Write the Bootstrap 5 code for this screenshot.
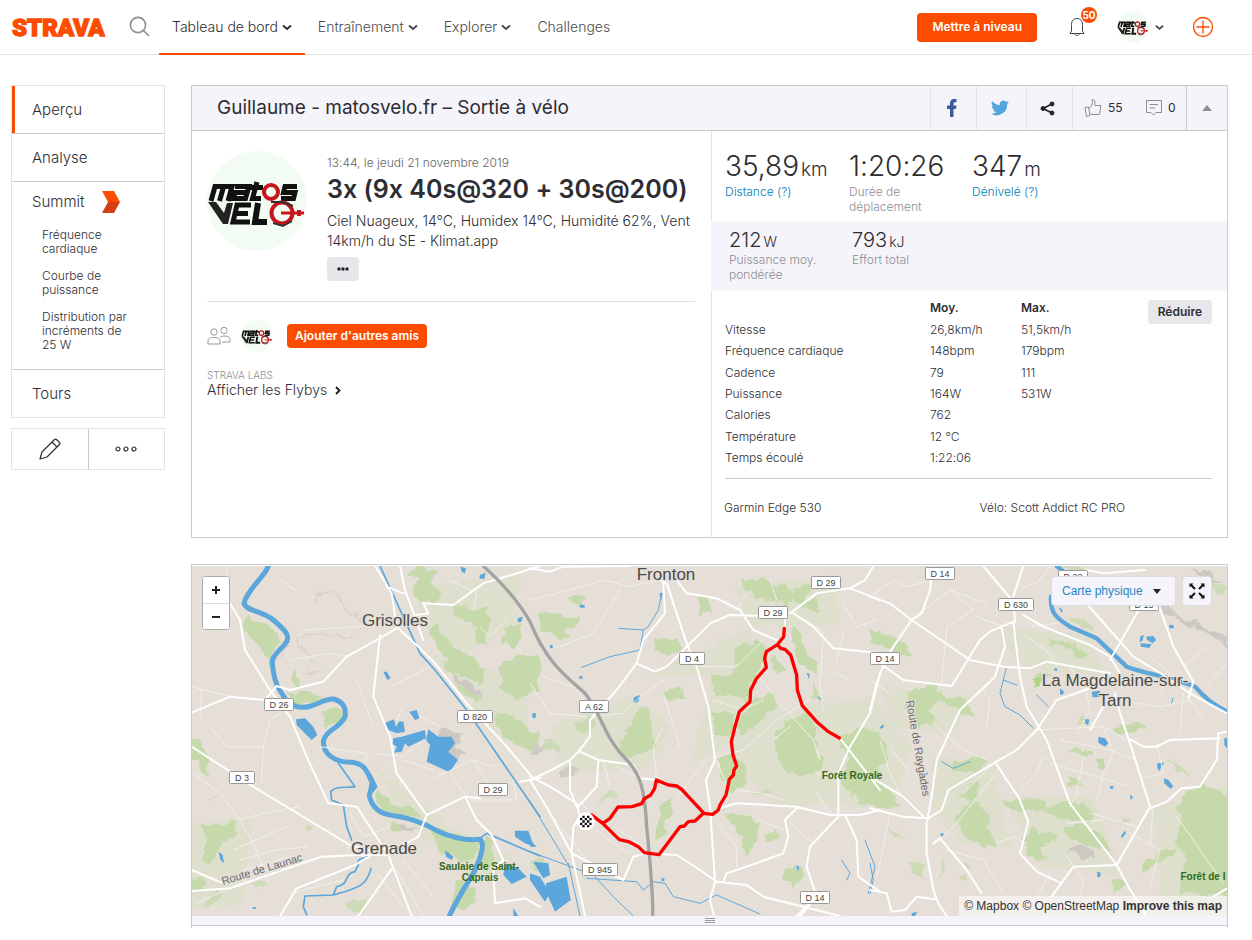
<!DOCTYPE html>
<html lang="fr">
<head>
<meta charset="utf-8">
<meta name="viewport" content="width=device-width, initial-scale=1">
<title>Sortie à vélo | Strava</title>
<link href="https://cdn.jsdelivr.net/npm/bootstrap@5.3.0/dist/css/bootstrap.min.css" rel="stylesheet">
<style>
  :root { --orange: #fc4c02; --ink: #2d2d32; --line: #c9c9cf; --soft: #e3e3e8; --tint: #f4f4fa; --blue: #007fb6; }
  body { font-family: Inter, "Liberation Sans", sans-serif; font-size: 14px; font-weight: 300; font-feature-settings: "calt" 0; line-height: 20px; color: var(--ink); background: #fff; }
  a { color: inherit; text-decoration: none; }
  svg { display: block; flex: none; }
  h1, h2, p, dl, dd, ul { margin: 0; }
  button { color: inherit; }

  .topbar { height: 55px; border-bottom: 1px solid #e3e3e3; padding: 0 38px 0 11px; }
  .topbar .nav-link { height: 55px; padding: 2px 13px 0; gap: 4px; color: #494950; display: flex; align-items: center; border-bottom: 2px solid transparent; }
  .topbar .nav-link.active { color: var(--ink); border-color: var(--orange); }
  .wordmark { font: 900 24px Roboto, sans-serif; fill: var(--orange); stroke: var(--orange); stroke-width: 1.4px; }
  .btn-orange { --bs-btn-bg: #fc4c02; --bs-btn-color: #fff; --bs-btn-hover-bg: #e34402; --bs-btn-hover-color: #fff; font-size: 12px; font-weight: 600; line-height: 16px; border: 0; }
  .upgrade { border-radius: 4px; padding: 6px 15px 7px; }
  .counter { top: -10px; left: 12px; width: 16px; height: 16px; border-radius: 8px; background: var(--orange); color: #fff; font-size: 10px; font-weight: 700; line-height: 16px; text-align: center; }
  .profile { gap: 6px; color: #494950; }

  .shell { display: grid; grid-template-columns: 154px minmax(0, 1fr); gap: 26px; padding: 30px 24px 0 11px; align-items: start; }
  .sidemenu { border: 1px solid var(--soft); }
  .sidemenu > li + li { border-top: 1px solid var(--line); }
  .sidemenu .entry { display: flex; align-items: center; height: 47px; padding-left: 20px; font-size: 15px; }
  .sidemenu .entry.current { border-left: 3px solid var(--orange); padding-left: 17px; }
  .sidemenu .entry.short { height: 40px; gap: 18px; }
  .sublist { padding: 6px 20px 15px 30px; font-size: 12px; line-height: 14px; }
  .sublist li { margin-bottom: 13px; }
  .sublist li:last-child { margin-bottom: 2px; }
  .tools { border: 1px solid var(--soft); margin-top: 10px; height: 42px; }
  .tools button { flex: 1; background: none; border: 0; padding: 0; display: grid; place-items: center; }
  .tools button + button { border-left: 1px solid var(--line); }

  .panel { border: 1px solid var(--line); }
  .panel-top { background: var(--tint); border-bottom: 1px solid var(--line); height: 45px; }
  .panel-top h1 { font-size: 19px; font-weight: 400; line-height: 44px; padding-left: 25px; }
  .share { border: 0; border-left: 1px solid var(--soft); background: none; padding: 0; display: grid; place-items: center; }
  .kudos { border-left: 1px solid var(--soft); width: 114px; font-size: 12px; padding-left: 11px; }
  .kudos button { border: 0; background: none; padding: 0; display: flex; align-items: center; gap: 6px; font-weight: 400; }
  .split { display: grid; grid-template-columns: minmax(0, 519fr) minmax(0, 516fr); min-height: 406px; }
  .left-side { padding: 16px 16px 16px 15px; }
  .when { font-size: 12px; line-height: 16px; color: #666; }
  .title { font-size: 25px; font-weight: 600; line-height: 36px; white-space: nowrap; }
  .more { background: #e6e6eb; border: 0; border-radius: 4px; width: 32px; height: 24px; padding: 0; display: grid; place-items: center; margin-top: 6px; }
  .friends { border-top: 1px solid #dfdfe3; margin-top: 20px; padding-top: 18px; }
  .labs { margin-top: 18px; }
  .labs span { display: block; font-size: 10px; line-height: 10px; color: #8e8e93; }
  .right { border-left: 1px solid var(--soft); }
  .stats { display: grid; padding: 17px 13px 0; grid-template-columns: 124px 123px 1fr; height: 90px; }
  .stats b { display: block; font-weight: 300; font-size: 28px; line-height: 36px; height: 36px; }
  .stats b span { font-size: 19px; margin-left: 2px; }
  .stats small { display: block; font-size: 12px; line-height: 15px; color: #8e8e93; }
  .stats a { color: var(--blue); }
  .stats.minor { background: var(--tint); height: 70px; padding: 7px 18px 0; grid-template-columns: 123px 1fr; margin-left: -1px; }
  .stats.minor b { font-size: 20px; line-height: 24px; height: 24px; }
  .stats.minor b span { font-size: 14px; }
  .detail { margin: 6px 15px 0 13px; border-bottom: 1px solid var(--line); height: 182px; }
  .detail table { font-size: 12px; line-height: 16px; height: 172px; width: 380px; }
  .detail th { font-weight: 300; padding: 0; }
  .detail thead tr { height: 22px; }
  .detail thead th { font-weight: 600; }
  .detail td { padding: 0; }
  .reduce { background: #e6e6eb; border: 0; border-radius: 4px; font-size: 12px; font-weight: 600; height: 24px; padding: 0 10px; margin-top: 3px; }
  .gear { font-size: 12px; padding: 19px 12px 0; }
  .gear .bike { padding-left: 20px; }

  .mapcard { margin-top: 26px; padding-top: 1px; }
  .mapbox { height: 350px; overflow: hidden; background: #e5dfd8; position: relative; }
  .mapbox > svg { width: 100%; height: 350px; }
  .zoomer { left: 10px; top: 10px; width: 28px; border: 1px solid #aaa; border-radius: 4px; background: #fff; overflow: hidden; }
  .zoomer button { display: grid; place-items: center; border: 0; background: #fff; width: 26px; height: 26px; padding: 0; }
  .zoomer button + button { border-top: 1px solid #ddd; }
  .overlay-btn { background: var(--tint); border: 1px solid #dcdce4; border-radius: 4px; height: 30px; top: 10px; }
  .layerpick { right: 51px; width: 125px; padding: 0 10px; color: #2b84c4; font: 12px/28px "Liberation Sans", sans-serif; display: flex; align-items: center; justify-content: space-between; }
  .fullview { right: 15px; width: 30px; padding: 0; display: grid; place-items: center; }
  .credit { right: 0; bottom: 0; background: rgba(255,255,255,.5); font: 12px/20px "Liberation Sans", sans-serif; padding: 0 5px; color: #333; }
  .grip { height: 9px; background: var(--tint); display: grid; place-items: center; }
  .chart-edge { height: 2px; border: solid var(--line); border-width: 0 1px; }
  .place { font: 17px "Liberation Sans", sans-serif; fill: #4a4a49; text-anchor: middle; stroke: #e5dfd8; stroke-width: 2px; paint-order: stroke; }
  .wood { font: bold 10px "Liberation Sans", sans-serif; fill: #33691e; text-anchor: middle; }
  .street { font: 11px "Liberation Sans", sans-serif; fill: #6b6b6b; stroke: #e5dfd8; stroke-width: 2px; paint-order: stroke; }
  .shield text { font: 9px "Liberation Sans", sans-serif; fill: #444; text-anchor: middle; }
  .shield rect { fill: #fff; stroke: #999; }
</style>
</head>
<body>
<svg width="0" height="0" class="position-absolute" aria-hidden="true">
  <defs>
    <symbol id="avatar" viewBox="0 0 100 100">
      <circle cx="50" cy="50" r="50" fill="#f3fcf3"/>
      <g fill="none" stroke="#111" stroke-width="5">
        <path d="M4 50 L8 35.500 H25 L21 50 M16.500 36 L12.500 50 M28 35.500 H42 L38.500 47.500 H26.500 L28 41.500 H40 M50 31 L45.500 47.500 H54 M43 36.500 H56"/>
        <path d="M90 35.500 H78 L76.500 41.500 H88 L86.500 47.500 H74"/>
        <path d="M44 54 H30 L26 71 H43 M29 62.500 H41"/>
        <path d="M51 52 L48 71 H60" stroke-width="6"/>
      </g>
      <path d="M1 51 H9 L17 62 L20 52 H26 L21 73 H16 Z" fill="#222"/>
      <g fill="none" stroke="#c8141c">
        <circle cx="64" cy="41" r="7" stroke-width="4"/><circle cx="75" cy="62" r="10.500" stroke-width="4"/>
        <path d="M74 62 H97" stroke-width="3"/><path d="M90 62 H94" stroke-width="6"/>
      </g>
      <path d="M64 51 L76 51 L86 55 M66 72 L76 75 L85 70" fill="none" stroke="#333" stroke-width="2"/>
    </symbol>
    <symbol id="chev" viewBox="0 0 10 7"><path d="M1 1.500 L5 5 L9 1.500" fill="none" stroke="currentColor" stroke-width="2"/></symbol>
    <filter id="ragged" x="-5%" y="-5%" width="110%" height="110%">
      <feTurbulence type="fractalNoise" baseFrequency=".09" numOctaves="3" seed="4"/>
      <feDisplacementMap in="SourceGraphic" scale="11" xChannelSelector="R" yChannelSelector="G"/>
    </filter>
  </defs>
</svg>

<header class="topbar d-flex align-items-center">
  <a href="#" aria-label="Strava"><svg width="98" height="36"><text class="wordmark" x="1" y="27">STRAVA</text></svg></a>
  <button class="btn p-0 border-0 ms-3 me-1" aria-label="Rechercher"><svg class="ms-1" width="22" height="22" viewBox="0 0 22 22" fill="none" stroke="#8c8c8c" stroke-width="1.600"><circle cx="9" cy="9" r="7.600"/><path d="M14.500 14.500 L20 20"/></svg></button>
  <nav class="d-flex ms-1">
    <a class="nav-link active" href="#">Tableau de bord <svg width="10" height="7"><use href="#chev"/></svg></a>
    <a class="nav-link" href="#">Entraînement <svg width="10" height="7"><use href="#chev"/></svg></a>
    <a class="nav-link" href="#">Explorer <svg width="10" height="7"><use href="#chev"/></svg></a>
    <a class="nav-link" href="#">Challenges</a>
  </nav>
  <button class="btn btn-orange upgrade ms-auto text-nowrap">Mettre à niveau</button>
  <button class="btn p-0 border-0 position-relative ms-4" aria-label="Notifications"><svg class="ms-2" width="16" height="20" viewBox="0 0 16 20" fill="none" stroke="#494950"><path d="M1 16.500 L2.500 14 V7.500 C2.500 3.500 5 1.500 8 1.500 C11 1.500 13.500 3.500 13.500 7.500 V14 L15 16.500 Z M6 17 C6 19 10 19 10 17"/></svg><span class="counter position-absolute ms-2">50</span></button>
  <a href="#" class="profile d-flex align-items-center ms-4" aria-label="Profil"><svg class="ms-2" width="32" height="32"><use href="#avatar"/></svg><svg width="9" height="7"><use href="#chev"/></svg></a>
  <button class="btn p-0 border-0 ms-4" aria-label="Ajouter"><svg class="ms-1" width="22" height="22" viewBox="0 0 22 22" fill="none" stroke="#fc4c02" stroke-width="1.300"><circle cx="11" cy="11" r="9.500"/><path d="M11 4.500 V17.500 M4.500 11 H17.500"/></svg></button>
</header>

<div class="shell">
  <aside>
    <ul class="sidemenu list-unstyled">
      <li><a class="entry current" href="#">Aperçu</a></li>
      <li><a class="entry" href="#">Analyse</a></li>
      <li><a class="entry short" href="#">Summit <svg width="18" height="22" viewBox="0 0 18 22"><path d="M0 0 H12 L18 11 H6 Z" fill="#fc4c02"/><path d="M0 22 H12 L18 11 H6 Z" fill="#d23f14"/></svg></a>
        <ul class="sublist list-unstyled">
          <li><a href="#">Fréquence cardiaque</a></li>
          <li><a href="#">Courbe de<br>puissance</a></li>
          <li><a href="#">Distribution par<br>incréments de<br>25 W</a></li>
        </ul></li>
      <li><a class="entry" href="#">Tours</a></li>
    </ul>
    <div class="tools d-flex">
      <button aria-label="Modifier"><svg width="24" height="24" viewBox="0 0 24 24" fill="none" stroke="#2d2d32" stroke-width="1.200" stroke-linejoin="round"><path d="M2 22 L4 15 L16.500 2.500 Q17.500 1.500 19 3 L21.500 5.500 Q22.500 6.500 21.500 7.500 L9 20 Z M14 5 L19 10"/></svg></button>
      <button aria-label="Plus d'actions"><svg width="22" height="6" viewBox="0 0 22 6" fill="none" stroke="#2d2d32" stroke-width="1.200"><circle cx="3" cy="3" r="2"/><circle cx="11" cy="3" r="2"/><circle cx="19" cy="3" r="2"/></svg></button>
    </div>
  </aside>

  <main>
    <section class="panel">
      <div class="panel-top d-flex">
        <h1 class="flex-grow-1">Guillaume - matosvelo.fr – Sortie à vélo</h1>
        <button class="share" style="width:46px" aria-label="Facebook"><svg class="me-1" width="10" height="18" viewBox="0 0 10 18" fill="#3b5998"><path d="M3 18 V10 H0 V6.500 H3 V4.500 C3 1.500 4.500 0 7 0 H9.500 V3.200 H8 C6.800 3.200 6.500 3.800 6.500 4.700 V6.500 H9.500 L9 10 H6.500 V18 Z"/></svg></button>
        <button class="share" style="width:50px" aria-label="Twitter"><svg class="me-1" width="18" height="16" viewBox="0 0 24 20" fill="#55a4dc"><path d="M24 2.400 a10 10 0 0 1-2.800.8 5 5 0 0 0 2.100-2.700 10 10 0 0 1-3.100 1.200 4.900 4.900 0 0 0-8.400 4.500 A14 14 0 0 1 1.700 1 a4.900 4.900 0 0 0 1.500 6.600 5 5 0 0 1-2.200-.6 4.900 4.900 0 0 0 4 4.900 5 5 0 0 1-2.300.1 4.900 4.900 0 0 0 4.600 3.400 A10 10 0 0 1 0 17.500 a14 14 0 0 0 21.500-12.400 A10 10 0 0 0 24 2.400"/></svg></button>
        <button class="share" style="width:46px" aria-label="Partager"><svg class="me-1" width="15" height="15" viewBox="0 0 15 15" fill="#242428" stroke="#242428"><path d="M12 3 L3 7.500 L12 12" fill="none" stroke-width="1.800"/><circle cx="12" cy="3" r="2"/><circle cx="3" cy="7.500" r="2"/><circle cx="12" cy="12" r="2"/></svg></button>
        <div class="kudos d-flex align-items-center">
          <button style="width:62px" aria-label="55 kudos"><svg width="18" height="18" viewBox="0 0 18 18" fill="none" stroke="#8e8e93"><path d="M1 8.500 L4.500 8 L6 16.500 L2.500 17.500 Z M4.800 10 L8.500 5 L8 1 C9.500 0 11 1.500 11 3 L11 6.500 H17 L15.500 15.500 H9 L6 15"/></svg><span>55</span></button>
          <button aria-label="0 commentaire"><svg width="16" height="16" viewBox="0 0 16 16" fill="none" stroke="#8e8e93"><path d="M.5 .5 H15.500 V12.500 H10 L7.500 15 L5 12.500 H.5 Z M3.500 4.500 H12 M3.500 8 H9"/></svg><span>0</span></button>
        </div>
        <button class="share" style="width:41px;border-color:#c9c9cf" aria-label="Réduire le panneau"><svg width="10" height="6"><path d="M0 6 L5 0 L10 6 Z" fill="#8e8e93"/></svg></button>
      </div>

      <div class="split">
        <div class="left-side">
          <div class="d-flex pt-1">
            <svg width="100" height="100"><use href="#avatar"/></svg>
            <div class="ms-3 ps-1 pt-1">
              <p class="when">13:44, le jeudi 21 novembre 2019</p>
              <h2 class="title">3x (9x 40s@320 + 30s@200)</h2>
              <p class="pt-1 text-nowrap">Ciel Nuageux, 14°C, Humidex 14°C, Humidité 62%, Vent<br>14km/h du SE - Klimat.app</p>
              <button class="more" aria-label="Plus"><svg width="12" height="4" fill="#242428"><circle cx="2" cy="2" r="1.700"/><circle cx="6" cy="2" r="1.700"/><circle cx="10" cy="2" r="1.700"/></svg></button>
            </div>
          </div>
          <div class="friends">
            <div class="d-flex align-items-center">
              <svg width="24" height="20" viewBox="0 0 24 20" fill="none" stroke="#999"><circle cx="7" cy="6" r="3.200"/><path d="M1 18 V15 C1 12 4 11.500 7 11.500 C10 11.500 13 12 13 15 V18 Z"/><circle cx="17" cy="4.500" r="3.200"/><path d="M13 11.500 C14 10.500 16 10 17 10 C20 10 23 10.500 23 13.500 V16 H15"/></svg>
              <svg class="ms-2 me-1" width="36" height="32"><use href="#avatar"/></svg>
              <button class="btn btn-orange rounded-1 ms-2 px-2 py-1 text-nowrap">Ajouter d'autres amis</button>
            </div>
            <div class="labs"><span>STRAVA LABS</span><a class="d-flex align-items-center gap-2" href="#">Afficher les Flybys <svg width="6" height="9"><path d="M1 1 L4.500 4.500 L1 8" fill="none" stroke="#242428" stroke-width="2"/></svg></a></div>
          </div>
        </div>

        <div class="right">
          <div class="stats">
            <div><b>35,89<span>km</span></b><small><a href="#">Distance (?)</a></small></div>
            <div><b>1:20:26</b><small>Durée de<br>déplacement</small></div>
            <div><b>347<span>m</span></b><small><a href="#">Dénivelé (?)</a></small></div>
          </div>
          <div class="stats minor">
            <div><b>212<span>W</span></b><small>Puissance moy.<br>pondérée</small></div>
            <div><b>793<span>kJ</span></b><small>Effort total</small></div>
          </div>
          <div class="detail d-flex justify-content-between align-items-start">
            <table>
              <colgroup><col style="width:205px"><col style="width:91px"><col></colgroup>
              <thead><tr><th></th><th scope="col">Moy.</th><th scope="col">Max.</th></tr></thead>
              <tbody>
                <tr><th scope="row">Vitesse</th><td>26,8km/h</td><td>51,5km/h</td></tr>
                <tr><th scope="row">Fréquence cardiaque</th><td>148bpm</td><td>179bpm</td></tr>
                <tr><th scope="row">Cadence</th><td>79</td><td>111</td></tr>
                <tr><th scope="row">Puissance</th><td>164W</td><td>531W</td></tr>
                <tr><th scope="row">Calories</th><td>762</td><td></td></tr>
                <tr><th scope="row">Température</th><td>12 ℃</td><td></td></tr>
                <tr><th scope="row">Temps écoulé</th><td>1:22:06</td><td></td></tr>
              </tbody>
            </table>
            <button class="reduce">Réduire</button>
          </div>
          <div class="gear row g-0"><div class="col">Garmin Edge 530</div><div class="col bike">Vélo: Scott Addict RC PRO</div></div>
        </div>
      </div>
    </section>

    <section class="panel mapcard">
      <div class="mapbox">
        <svg viewBox="0 0 1035 350" preserveAspectRatio="xMidYMid slice" fill="none" stroke-linecap="round" stroke-linejoin="round" role="img" aria-label="Tracé de la sortie">
          <g filter="url(#ragged)">
          <!-- light scrub -->
          <g fill="#dbdfc6" opacity=".6">
            <path d="M220 20 L330 10 L320 60 L270 90 L230 60 Z M240 90 L330 110 L340 190 L300 160 Z M360 160 L440 130 L480 160 L460 200 L370 210 Z M450 110 L520 80 L560 60 L560 160 L500 200 L520 110 Z M0 260 L60 250 L50 340 L0 340 Z M180 200 L260 260 L320 290 L290 320 L230 270 Z M560 150 L680 130 L720 180 L700 240 L590 240 L530 200 Z M690 120 L780 130 L760 170 L700 160 Z M740 190 L800 200 L820 280 L770 280 L740 240 Z M810 230 L900 230 L930 310 L850 300 Z M960 240 L1035 220 L1035 340 L970 340 Z M800 60 L900 70 L910 110 L830 100 Z M540 20 L640 10 L650 60 L560 60 Z"/>
          </g>
          <!-- woods, west -->
          <g transform="translate(-2 -6) scale(.33333)">
            <g fill="#c5d9aa">
              <path d="M165 170 L215 190 L262 215 L272 245 L245 285 L240 325 L215 270 L180 230 L160 195 Z"/>
              <path d="M290 395 L350 395 L400 405 L370 430 L320 435 Z M400 455 L440 435 L458 450 L450 490 L405 508 Z M302 335 L325 350 L335 390 L320 385 Z"/>
              <path d="M650 35 L690 18 L740 35 L725 65 L750 95 L745 130 L690 125 L665 95 L685 60 Z M795 140 L850 150 L890 140 L905 175 L890 215 L895 260 L860 250 L850 195 L800 165 Z"/>
              <path d="M715 200 L745 195 L760 230 L800 270 L850 290 L885 340 L880 368 L830 355 L790 340 L755 315 L780 305 L755 270 L725 235 Z"/>
              <path d="M940 200 L990 190 L995 230 L970 265 L930 250 L955 225 Z M920 320 L1000 285 L1050 290 V400 L1010 405 L980 420 L925 385 L940 360 Z M790 370 L830 380 L885 420 L830 410 Z M915 455 L970 475 L1020 510 L1050 520 V580 L1000 570 L940 530 L925 500 Z"/>
              <path d="M5 530 L35 545 L55 600 L50 650 L20 600 L5 590 Z M35 800 L135 785 L140 820 L100 850 L60 920 L40 900 L50 840 Z M5 960 L50 955 L40 990 L5 990 Z"/>
              <path d="M560 680 L600 730 L680 750 L690 775 L600 765 L560 735 Z M720 800 L830 835 L870 850 L860 895 L820 905 L760 880 L740 850 Z M885 830 L910 850 L915 900 L890 940 L870 920 Z M800 960 L850 985 L860 1020 L820 1045 L780 1040 Z M600 790 L650 790 L640 815 L600 805 Z"/>
              <path d="M185 970 L225 960 L215 985 Z M470 1030 L530 1020 L525 1060 L480 1050 Z M340 790 L375 795 L350 808 Z M40 1040 L75 1000 L90 1010 L60 1045 Z" opacity=".7"/>
            </g>
            <path d="M760 500 L815 525 L800 560 L820 580 L800 600 L770 570 L745 530 Z M620 790 L680 800 L660 812 L625 800 Z M790 345 L840 370 L880 410 L850 400 L800 365 Z" fill="#cdc8c4"/>
            <g stroke="#cfcac3" stroke-width="3"><path d="M380 130 L385 100 L440 95 L460 150 L500 165 L520 200 L480 230 L380 225 L340 230 M300 250 L270 300 M320 230 L330 270 L370 300 L360 320 M345 340 L395 335 M930 330 L990 315 M60 720 L85 700 M1000 560 L1040 580"/></g>
          </g>
          <!-- woods, centre -->
          <g transform="translate(338 -6) scale(.33333)" fill="#c5d9aa">
            <path d="M20 165 L80 155 L150 175 L145 200 L105 205 L110 240 L80 235 L40 210 Z M115 110 L165 105 L160 140 L120 135 Z M500 110 L540 110 L545 165 L515 160 Z"/>
            <path d="M640 60 L700 55 L735 75 L770 70 L790 110 L780 145 L740 115 L690 120 L645 90 Z M785 90 L830 70 L845 90 L820 115 L860 115 L870 160 L830 150 L790 120 Z"/>
            <path d="M535 340 L600 350 L620 320 L610 265 L680 240 L710 260 L700 310 L670 370 L650 420 L590 400 L560 420 L550 380 Z M640 470 L670 420 L725 400 L740 435 L690 490 L640 520 L620 500 Z M715 300 L740 290 L770 340 L745 340 Z"/>
            <path d="M310 460 L350 440 L370 485 L375 560 L330 580 L290 600 L270 570 L285 520 Z M545 455 L610 460 L600 530 L555 525 Z M560 590 L610 580 L650 620 L650 670 L600 700 L575 650 Z"/>
            <path d="M740 520 L770 480 L830 455 L855 500 L855 570 L880 600 L840 650 L780 640 L740 600 Z M930 545 L975 505 L1050 510 V740 L990 720 L940 690 L935 640 L960 600 Z M380 240 L440 235 L455 270 L410 290 L375 275 Z M400 390 L450 380 L470 410 L435 425 L405 415 Z"/>
            <path d="M395 730 L425 715 L430 750 L405 790 L410 825 L370 840 L385 790 Z M580 750 L640 760 L690 790 L680 830 L650 890 L630 870 L640 830 L600 790 Z M710 820 L745 810 L745 840 L705 845 Z M760 930 L820 920 L825 950 L790 985 L760 960 Z M780 220 L800 200 L830 280 L870 310 L860 350 L810 310 Z M850 370 L870 400 L880 440 L850 410 Z"/>
            <path d="M5 900 L40 890 L60 920 L20 940 Z M50 540 L90 555 L80 580 L40 570 Z M200 730 L240 690 L260 710 Z M660 700 L710 690 L730 710 Z M130 500 L180 470 L200 500 L150 520 Z" opacity=".7"/>
            <path d="M5 545 L50 555 L20 585 L5 590 Z M80 640 L120 615 L150 625 L130 650 L90 650 Z" fill="#cfcbc4"/>
          </g>
          <!-- woods, east -->
          <g transform="translate(678 -6) scale(.33333)" fill="#c5d9aa">
            <path d="M0 205 L50 225 L90 235 L120 285 L80 285 L60 265 L0 250 Z M110 390 L200 380 L230 410 L280 410 L310 465 L280 475 L260 440 L210 430 L180 445 L190 490 L150 500 L110 440 Z M0 520 L50 555 L45 600 L0 620 Z M0 660 L60 690 L90 740 L40 745 L0 720 Z"/>
            <path d="M260 600 L330 585 L350 600 L330 630 L290 635 L250 630 Z M320 660 L330 700 L310 720 L350 760 L375 860 L345 865 L280 820 L255 780 L300 720 L260 710 Z M395 725 L490 715 L540 740 L590 730 L660 740 L670 785 L600 780 L490 750 L420 750 Z"/>
            <path d="M490 810 L560 825 L555 850 L515 850 L530 900 L500 905 L470 880 L460 840 Z M580 805 L640 790 L700 830 L720 880 L640 850 L600 830 Z M600 645 L620 650 L625 680 L590 680 Z M600 570 L665 570 L670 585 L600 580 Z M680 600 L705 600 L705 630 L680 625 Z"/>
            <path d="M920 740 L950 705 L1000 670 L1060 700 L1090 690 V1005 L930 1000 L930 950 L950 900 L920 850 L935 790 Z M730 500 L820 485 L825 510 L740 525 Z M820 910 L880 870 L930 870 L900 890 L860 905 L825 940 Z M735 960 L765 970 L750 1000 L730 1000 Z M540 235 L600 245 L650 290 L640 300 L590 260 L540 250 Z M490 350 L520 335 L550 340 L510 365 Z"/>
            <path d="M570 25 L620 18 L650 30 L640 55 Z M590 170 L640 180 L680 210 L640 205 Z M1010 60 L1070 80 V110 L1040 100 Z M215 890 L230 930 L210 960 L215 920 Z M280 900 L300 910 L275 960 L290 960 Z M110 910 L165 905 L160 960 L140 940 Z M900 595 L950 640 L960 660 L910 620 Z M760 775 L790 785 L750 790 Z M640 460 L650 500 L620 490 Z M40 800 L80 820 L110 835 L80 830 Z" opacity=".75"/>
            <path d="M488 355 H512 V380 H490 Z" fill="#aed581"/>
            <path d="M880 130 L930 170 L990 190 L1071 235 V260 L1000 210 L930 185 L870 145 Z M965 30 L1020 40 L1060 70 L1000 65 Z M590 870 L640 855 L680 885 L640 895 Z" fill="#cdc8c2"/>
          </g>
          </g>

          <!-- water -->
          <g transform="translate(-2 -6) scale(.33333)" stroke="#5ba6da">
            <path d="M235 18 C225 50 170 90 162 130 C170 155 215 150 250 180 C285 210 300 225 290 245 C270 275 245 285 247 310 C250 345 255 370 270 392 C285 415 290 430 320 440 C370 450 395 415 430 417 C460 425 470 445 465 470 C450 505 405 510 400 545 C400 580 430 605 480 607 C520 608 530 630 543 660 C560 690 530 690 540 715 C555 765 600 765 640 772 C690 785 710 795 740 812 C790 835 830 842 870 838 C885 850 875 890 850 940 C820 990 800 1020 778 1068" stroke-width="15"/>
            <path d="M570 18 L690 280 L735 330 L830 450 L1050 770 M445 610 L495 680 C470 685 440 675 422 695 L425 720 L460 735 L470 800 L485 840 M545 885 C520 900 500 890 505 915 L495 935 C460 940 480 975 440 980 L430 1005 L345 1008 L340 1040 L350 1064 M870 835 L890 820 L1050 888 M543 925 C530 980 500 985 430 1005" stroke-width="5"/>
            <g fill="#5ba6da" stroke="none"><path d="M318 478 L345 475 L370 500 L382 525 L365 540 L340 515 L320 495 Z M580 335 L590 335 L602 355 L592 360 Z M658 455 L680 450 L688 475 L675 480 Z M583 490 L612 478 L618 500 L628 484 L640 485 L645 515 L620 520 L595 510 Z M610 535 L635 530 L705 510 L708 535 L655 560 L645 550 L635 575 L612 578 L620 560 L608 552 Z M715 508 L745 530 L785 530 L795 550 L775 575 L804 600 L778 637 L710 605 L720 555 L708 540 Z M543 640 L563 680 L548 700 L535 690 Z M765 870 L790 890 L785 900 L768 890 Z M975 812 L1015 812 L1032 860 L1005 850 L975 830 Z M945 910 L985 925 L1010 950 L965 972 L940 945 Z M85 875 L98 885 L102 910 L92 900 Z M812 20 L828 25 L825 40 L815 35 Z M870 45 L888 38 L882 58 L868 55 Z M983 175 L998 170 L995 185 L983 187 Z M1028 460 h8 v14 h-8 Z M970 1045 L985 1068 H970 Z M188 1042 h10 v5 h-10 Z"/></g>
          </g>
          <g transform="translate(338 -6) scale(.33333)" stroke="#5ba6da">
            <path d="M0 725 L115 915 M115 910 L150 1068 M0 875 L190 945 L250 1010 L310 1068 M170 955 L320 965 L340 990 L370 965 L405 970 L430 1010 L510 1030 L560 1005 L690 1062 M395 100 L385 150 L355 200 L340 210 L265 205 M340 210 L330 270 L240 290 L155 322 M1005 840 L1035 920 L1015 1000 M935 900 L960 940 L950 960" stroke-width="3"/>
            <path d="M10 905 L55 910 L60 945 L40 955 L30 940 Z M0 940 L30 950 L60 1000 L45 1025 L0 960 Z M48 970 L110 950 L122 1020 L75 1055 L50 1000 Z M0 840 L20 860 L0 860 Z M312 412 L330 405 L325 425 L310 430 Z M60 255 h8 v10 h-8 Z M148 348 h9 v8 h-9 Z M8 460 h9 v12 h-9 Z M150 135 h14 v8 h-14 Z M830 340 L838 340 L838 358 Z M862 408 L872 415 L872 422 Z M798 915 L808 920 L805 935 Z M395 955 h8 v8 h-8 Z M388 100 L398 98 L394 120 Z" fill="#5ba6da" stroke="none"/>
          </g>
          <g transform="translate(678 -6) scale(.33333)" stroke="#5ba6da">
            <path d="M560 18 L575 30 L600 60 M543 110 C540 160 560 175 600 200 L680 235 L770 320 C840 345 880 345 975 380 C1000 410 1030 435 1071 455" stroke-width="13"/>
            <path d="M410 320 L400 360 L390 400 L405 440 L450 465 L490 505 M400 360 L440 375 M500 405 L535 440 M215 605 L250 625 L300 605 M0 910 L10 960 L0 1000 M908 415 L905 430" stroke-width="3"/>
            <path d="M30 500 L42 493 L40 502 L32 508 Z M565 140 L578 150 L575 160 Z M812 228 L822 226 L816 244 L808 246 Z M828 230 L850 228 L858 240 L848 250 L832 240 Z M812 250 L845 252 L838 264 L812 260 Z M897 195 L910 195 L912 205 L898 205 Z M570 385 L582 395 L578 405 L570 402 Z M665 395 L690 392 L690 410 L668 412 Z M645 478 L658 478 L655 495 L647 492 Z M685 530 L705 535 L715 550 L705 560 L685 548 Z M862 610 L882 608 L868 632 L862 625 Z M882 655 L895 660 L910 678 L902 687 L883 670 Z M780 705 L790 710 L782 720 Z M753 828 L765 812 L768 818 L757 835 Z M682 935 L692 938 L690 952 L682 950 Z M1063 535 L1071 535 V565 L1063 555 Z M720 678 h10 v8 h-10 Z M212 820 h8 v8 h-8 Z M165 640 L175 637 L170 647 Z M125 1060 L142 1055 L135 1068 H125 Z M553 325 h8 v7 h-8 Z" fill="#5ba6da" stroke="none"/>
          </g>

          <!-- lanes -->
          <g stroke="#f3efea" stroke-width="3">
            <g transform="translate(-2 -6) scale(.33333)"><path d="M5 380 L120 410 M30 470 L35 390 M110 18 V70 L125 170 M270 60 L330 100 M340 210 L500 200 L610 195 M480 290 L420 280 L300 300 M500 360 L520 420 L550 500 M600 380 L720 320 M640 440 L620 480 M870 200 L900 230 L950 180 M560 580 L640 590 L700 540 M640 600 L730 630 M730 655 L850 600 L910 620 M850 600 L900 680 M780 640 L830 710 M835 720 L980 720 L970 660 M10 640 L90 700 L150 780 L190 850 L235 970 M150 780 L220 760 L330 740 M150 900 L260 870 L350 860 M160 930 L300 890 M130 870 L290 800 M60 500 L110 560 L220 560 L215 660 M220 560 L240 480 L270 460 M300 1000 L460 960 M620 930 L700 1068 M640 900 L730 1010 M560 940 L640 1040 M600 800 L520 830 L480 760 M470 860 L540 900 M20 1030 L170 960 M390 560 L530 580 L530 600 M690 470 L750 500 M780 60 L860 100 L850 150"/></g>
            <g transform="translate(338 -6) scale(.33333)"><path d="M0 120 L120 90 L220 60 L300 80 L390 60 M90 260 L190 220 L270 90 M40 350 L130 380 L180 440 M190 470 L280 460 L330 410 L400 360 M400 400 L450 560 M510 320 L620 320 L700 240 M550 420 L640 450 L700 420 M560 590 L640 570 L740 480 L840 420 M380 660 L370 560 L400 500 M620 690 L700 700 L760 720 M600 700 L560 600 M680 340 L750 430 L850 540 L870 600 M250 800 L340 860 L350 900 M160 780 L250 850 L300 880 M130 700 L180 760 L200 800 M60 760 L170 900 M570 800 L620 860 L620 920 M690 780 L760 810 M730 540 L780 500 M650 100 L620 150 M720 60 L740 120 L690 160 M830 180 L880 220 L870 380 L880 450 M940 130 L980 200 L1040 180 M900 330 L960 360 M940 220 L920 300 M860 700 L910 770 M860 640 L920 650 M780 790 L850 850 M440 720 L480 660 L530 600 M220 600 L240 680 M260 620 L320 650 M0 370 L60 460 L170 470"/></g>
            <g transform="translate(678 -6) scale(.33333)"><path d="M0 110 L70 60 L110 80 L190 60 M120 180 L240 90 L350 130 M240 90 L310 150 L230 200 L215 370 M320 170 L400 200 M460 80 L500 70 L540 20 M470 230 L540 280 L560 320 M560 190 L480 200 M600 320 L650 400 L660 450 L620 520 M500 510 L700 500 L770 540 M570 540 L720 570 L800 600 M540 610 L680 650 L780 680 M640 590 L620 700 L600 740 M700 500 L730 580 L700 640 L680 720 M660 760 L800 800 M590 790 L700 780 M520 590 L500 640 L450 690 M200 500 L280 570 L350 600 M350 500 L360 420 L340 390 L360 370 M30 540 L60 640 L90 700 M60 560 L120 640 M0 360 L60 400 M800 430 L870 440 L960 420 M960 420 L1000 480 M940 400 L930 520 M860 550 L880 640 L830 650 M920 770 L1060 970 M850 740 L840 850 M840 290 L900 340 L870 400 M940 320 L1010 260 M1071 310 L1010 380 M780 820 L870 870 L840 980 M590 890 L640 960 L630 1010 M380 850 L430 830 L470 850 M210 840 L260 790 L330 700 L370 650 M60 760 L40 860 L20 950 M230 870 L340 900 L400 1000 M540 940 L500 1010 M280 700 L360 620"/></g>
          </g>
          <!-- main roads -->
          <g stroke="#fff" stroke-width="6">
            <g transform="translate(-2 -6) scale(.33333)"><path d="M5 458 L120 410 L225 420 L260 378 L300 390 L400 365 L470 290 L560 240 L620 205 M120 130 L150 180 L165 270 L240 390 L300 470 L350 590 L415 730 M5 560 L190 680 L480 855 L590 885 M5 993 L120 985 L395 890 L500 885 L590 885 L685 830 L710 765 L825 710 L870 715 M555 18 L605 100 L620 200 L685 260 L735 310 L830 430 L950 560 L1030 655 M1050 18 L980 40 L880 70 L790 135 L700 130 L715 160 L680 165 M630 18 L645 90 L700 240 M570 225 L550 410 L600 530 L620 640 L710 765 M415 730 L500 740 L595 885 L665 1068 M270 1068 L320 985 L495 915 L545 885 M505 1068 L610 920 M825 710 L860 780 L905 825 L940 900 L910 930 L915 1030 L1005 1015 L1050 1040 M990 665 L1050 655 M5 930 L100 970 M590 80 L640 100"/></g>
            <g transform="translate(338 -6) scale(.33333)"><path d="M0 25 L60 35 L100 20 L300 18 M390 60 L410 70 L470 250 L500 320 L535 440 L555 600 L528 660 L540 740 L555 965 L540 1020 L552 1068 M440 60 L470 100 L560 115 L630 150 L670 210 L740 240 M400 70 L405 160 L340 240 L320 310 L260 390 L180 480 L180 530 L145 575 L120 600 L65 630 L0 660 M320 310 L375 335 L410 320 L480 250 L540 190 L600 165 L700 168 M765 200 L765 165 M780 160 L860 100 L960 85 L1050 120 M790 160 L850 200 L910 265 L1050 280 M960 85 L1005 60 L1030 18 M1050 340 L1020 460 L960 560 L925 640 L925 770 L840 860 L830 920 L860 1010 L800 1068 M930 535 L1050 690 M570 745 L620 730 L800 740 L900 765 L990 765 L1050 750 M0 660 L55 750 L125 880 L165 1068 M0 650 L60 680 L140 730 L150 770 L130 800 L125 880 M150 575 L205 600 L310 615 L330 655 L380 660 M205 600 L200 680 L145 740 M120 600 L120 690 L140 740 M125 880 L280 960 L310 890 L350 880 L440 885 L510 930 L560 965 L650 975 L700 1010 L930 1068 M580 965 L590 940 L650 920 L760 880 L775 830 L765 780 L805 740 M945 765 L980 840 L985 950 L1050 995 M840 1035 L810 1068"/></g>
            <g transform="translate(678 -6) scale(.33333)"><path d="M0 110 L60 130 L125 180 L300 300 L400 320 L480 325 L530 305 L720 340 M190 18 L180 90 L155 160 L125 180 L50 290 L20 370 L0 450 M30 310 L100 360 L245 378 L330 240 L360 215 L430 185 L440 270 L450 350 L470 440 L530 540 L600 730 L740 915 L775 980 L830 1068 M395 200 L405 260 L375 350 L270 450 L200 600 L185 710 L170 790 L170 880 L190 990 L205 1030 L230 1068 M340 18 L430 125 L435 185 M430 110 L460 18 M460 165 L520 200 L660 255 L720 290 L750 340 M640 120 L720 210 L790 290 L880 345 L960 400 L1071 460 M835 100 L720 300 M865 130 L910 260 L970 365 L955 415 M735 400 L750 460 L790 580 L840 740 L740 915 L610 920 L545 1010 M840 745 L890 725 L935 685 L990 680 L1040 600 L1045 520 L1071 515 M775 535 L820 560 L860 560 L900 540 L1050 535 M730 360 L560 420 L500 510 L440 570 L380 605 L235 690 L215 750 L175 775 L100 770 L0 745 M375 605 L410 660 L445 710 L475 785 L450 880 L500 935 L575 970 M0 650 L100 710 L160 770 M190 850 L210 835 L290 930 L335 1000 M0 990 L50 1000 L65 1055 L105 1050 L140 1010 L195 1018 M700 440 L660 510 M650 30 L700 40 L825 30 M1071 985 L1030 1010"/></g>
          </g>
          <!-- motorway -->
          <path transform="translate(338 -6) scale(.33333)" d="M-140 18 C-60 90 -20 150 0 185 C50 310 110 350 165 400 C215 460 220 530 290 600 C330 640 345 690 350 800 C360 900 370 1000 368 1068" stroke="#a3a3a3" stroke-width="10"/>

          <g class="place"><text x="203" y="60">Grisolles</text><text x="192" y="288">Grenade</text><text x="474" y="14">Fronton</text><text x="923" y="120">La Magdelaine-sur-</text><text x="923" y="140">Tarn</text></g>
          <g class="wood"><text x="287" y="304">Saulaie de Saint-</text><text x="288" y="315">Caprais</text><text x="660" y="213">Forêt Royale</text><text x="1011" y="314">Forêt de I</text></g>
          <g class="street"><text transform="translate(31 319) rotate(-17)">Route de Launac</text><text transform="translate(714 135) rotate(80)">Route de Raygades</text></g>
          <g class="shield">
            <g transform="translate(87 139)"><rect x="-14.500" y="-6.500" width="29" height="12" rx="1"/><text y="3">D 26</text></g>
            <g transform="translate(50 212)"><rect x="-12.500" y="-6.500" width="25" height="12" rx="1"/><text y="3">D 3</text></g>
            <g transform="translate(283 151)"><rect x="-17.500" y="-6.500" width="35" height="12" rx="1"/><text y="3">D 820</text></g>
            <g transform="translate(301 224)"><rect x="-14.500" y="-6.500" width="29" height="12" rx="1"/><text y="3">D 29</text></g>
            <g transform="translate(402 141)"><rect x="-14.500" y="-6.500" width="29" height="12" rx="1"/><text y="3">A 62</text></g>
            <g transform="translate(500 93)"><rect x="-12.500" y="-6.500" width="25" height="12" rx="1"/><text y="3">D 4</text></g>
            <g transform="translate(581 47)"><rect x="-14.500" y="-6.500" width="29" height="12" rx="1"/><text y="3">D 29</text></g>
            <g transform="translate(634 17)"><rect x="-14.500" y="-6.500" width="29" height="12" rx="1"/><text y="3">D 29</text></g>
            <g transform="translate(408 304)"><rect x="-17.500" y="-6.500" width="35" height="12" rx="1"/><text y="3">D 945</text></g>
            <g transform="translate(623 332)"><rect x="-14.500" y="-6.500" width="29" height="12" rx="1"/><text y="3">D 14</text></g>
            <g transform="translate(693 93)"><rect x="-14.500" y="-6.500" width="29" height="12" rx="1"/><text y="3">D 14</text></g>
            <g transform="translate(748 8)"><rect x="-14.500" y="-6.500" width="29" height="12" rx="1"/><text y="3">D 14</text></g>
            <g transform="translate(824 39)"><rect x="-17.500" y="-6.500" width="35" height="12" rx="1"/><text y="3">D 630</text></g>
            <g transform="translate(881 11)"><rect x="-14.500" y="-6.500" width="29" height="12" rx="1"/><text y="3">D 22</text></g>
            <g transform="translate(952 39)"><rect x="-14.500" y="-6.500" width="29" height="12" rx="1"/><text y="3">D 15</text></g>
          </g>

          <!-- ride -->
          <g transform="translate(338 -6) scale(.33333)">
            <path d="M763 205 L761 230 L742 254 L709 275 L704 295 L709 322 L680 355 L662 390 L660 425 L628 455 L615 500 L604 545 L609 585 L620 618 L612 630 L610 645 L598 658 L588 705 L570 735 L565 750 L548 763 L520 760 L495 783 L475 785 L463 798 L450 800 L387 884 L343 878 L325 860 L298 846 L268 839 L218 790 L240 775 L264 741 L306 740 L335 731 L342 717 L362 705 L374 685 L379 660 L415 675 L440 678 L455 688 L522 760 M742 254 L752 265 L765 268 L782 285 L800 345 L802 390 L817 437 L860 485 L895 515 L928 534 M218 790 L185 765" stroke="#f00" stroke-width="10"/>
            <circle cx="167" cy="784" r="27" fill="#fff"/>
            <path d="M157 767 h7 v7 h-7Z M171 767 h7 v7 h-7Z M150 774 h7 v7 h-7Z M164 774 h7 v7 h-7Z M178 774 h7 v7 h-7Z M157 781 h7 v7 h-7Z M171 781 h7 v7 h-7Z M150 788 h7 v7 h-7Z M164 788 h7 v7 h-7Z M178 788 h7 v7 h-7Z M157 795 h7 v7 h-7Z M171 795 h7 v7 h-7Z" fill="#111"/>
          </g>
        </svg>

        <div class="zoomer position-absolute">
          <button aria-label="Zoom avant"><svg width="8" height="8"><path d="M4 0 V8 M0 4 H8" stroke="#222" stroke-width="2"/></svg></button>
          <button aria-label="Zoom arrière"><svg width="8" height="8"><path d="M0 4 H8" stroke="#222" stroke-width="2"/></svg></button>
        </div>
        <button class="overlay-btn layerpick position-absolute">Carte physique <svg class="me-1" width="8" height="5"><path d="M0 0 H8 L4 5 Z" fill="#242428"/></svg></button>
        <button class="overlay-btn fullview position-absolute" aria-label="Plein écran"><svg width="16" height="16" viewBox="0 0 16 16" fill="#111" stroke="#111" stroke-width="2"><path d="M2 2 L6 6 M14 2 L10 6 M2 14 L6 10 M14 14 L10 10"/><path d="M.5 .5 H4.500 L.5 4.500 Z M15.500 .5 V4.500 L11.500 .5 Z M.5 15.500 V11.500 L4.500 15.500 Z M15.500 15.500 H11.500 L15.500 11.500 Z" stroke="none"/></svg></button>
        <div class="credit position-absolute"><a href="#">© Mapbox</a> <a href="#">© OpenStreetMap</a> <a class="fw-bold" href="#">Improve this map</a></div>
      </div>
      <div class="grip"><svg width="10" height="5"><path d="M0 .5 H10 M0 2.500 H10 M0 4.500 H10" stroke="#999"/></svg></div>
    </section>
    <div class="chart-edge"></div>
  </main>
</div>
<script src="https://cdn.jsdelivr.net/npm/bootstrap@5.3.0/dist/js/bootstrap.bundle.min.js"></script>
</body>
</html>
